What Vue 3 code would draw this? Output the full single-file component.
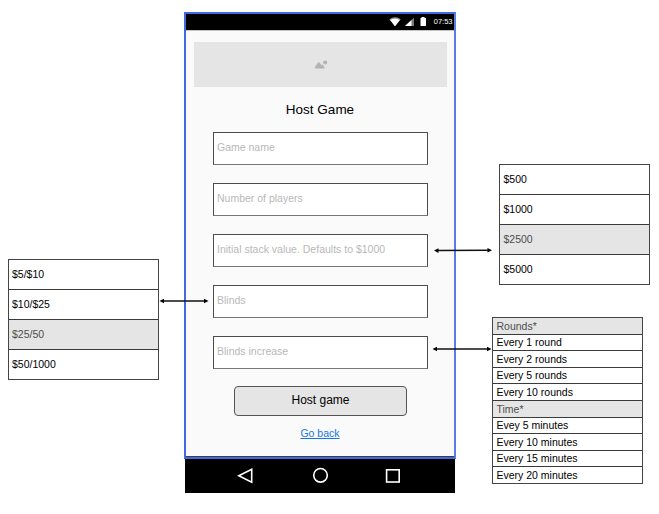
<script setup>
const fields = [
  'Game name',
  'Number of players',
  'Initial stack value. Defaults to $1000',
  'Blinds',
  'Blinds increase',
]

const menus = [
  {
    name: 'blinds',
    items: [
      { label: '$5/$10' },
      { label: '$10/$25' },
      { label: '$25/50', muted: true },
      { label: '$50/1000' },
    ],
  },
  {
    name: 'stack',
    items: [
      { label: '$500' },
      { label: '$1000' },
      { label: '$2500', muted: true },
      { label: '$5000' },
    ],
  },
  {
    name: 'increase',
    items: [
      { label: 'Rounds*', muted: true },
      { label: 'Every 1 round' },
      { label: 'Every 2 rounds' },
      { label: 'Every 5 rounds' },
      { label: 'Every 10 rounds' },
      { label: 'Time*', muted: true },
      { label: 'Evey 5 minutes' },
      { label: 'Every 10 minutes' },
      { label: 'Every 15 minutes' },
      { label: 'Every 20 minutes' },
    ],
  },
]

const arrows = [
  { x1: 159.5, y1: 301, x2: 208.5, y2: 301 },
  { x1: 434, y1: 250.6, x2: 492, y2: 250.2 },
  { x1: 432.5, y1: 349, x2: 491.5, y2: 349 },
]
</script>

<template>
  <main class="canvas">
    <section class="phone">
      <div class="screen">
        <header class="status">
          <svg class="status-icons" width="40" height="12" viewBox="0 0 40 12">
            <path d="M0.3 3.2Q6 -0.8 11.7 3.2L6 10.300Z" fill="#999" />
            <path d="M1.200 4Q6 1.400 10.800 4L6 10.300Z" fill="#fff" />
            <path d="M16 10L25 1.5V10Z" fill="#777" />
            <path d="M16 10L22.5 4V10Z" fill="#fff" />
            <path d="M32.5 1H35.500V2H37V10H31.500V2H32.500Z" fill="#fff" />
          </svg>
          <span class="clock">07:53</span>
        </header>
        <div class="banner">
          <svg width="14" height="10" viewBox="0 0 14 10" fill="#b3b3b3">
            <path d="M1 8.500L1.300 6.500L4 2.500Q4.800 1.800 5.600 2.600L7.700 5.500L8.700 4.600L10.400 7.300V8.500Z" />
            <circle cx="11.200" cy="2.400" r="2" />
          </svg>
        </div>
        <h1>Host Game</h1>
        <form class="fields">
          <div v-for="field in fields" :key="field" class="field">{{ field }}</div>
        </form>
        <div class="submit">Host game</div>
        <a class="back">Go back</a>
      </div>
      <nav class="navbar">
        <svg width="270" height="34" viewBox="0 0 270 34" fill="none" stroke="#fff" stroke-width="1.6">
          <path d="M66.700 10.300V23.300L53.800 16.800Z" />
          <circle cx="135.500" cy="16.300" r="6.800" />
          <rect x="201.600" y="10.800" width="12.600" height="12.200" />
        </svg>
      </nav>
    </section>

    <ul v-for="menu in menus" :key="menu.name" class="menu" :class="menu.name">
      <li v-for="item in menu.items" :key="item.label" :class="{ muted: item.muted }">
        <span>{{ item.label }}</span>
      </li>
    </ul>

    <svg class="arrows" width="659" height="514" viewBox="0 0 659 514">
      <g v-for="a in arrows" :key="a.x1">
        <line :x1="a.x1 + 3" :y1="a.y1" :x2="a.x2 - 3" :y2="a.y2" stroke="#111" stroke-width="1.5" />
        <path :d="`M${a.x1} ${a.y1}l4.500 -2.300v4.600z`" />
        <path :d="`M${a.x2} ${a.y2}l-4.500 -2.300v4.600z`" />
      </g>
    </svg>
  </main>
</template>

<style>
body {
  margin: 0;
  background: #fff;
}
</style>

<style scoped>
.canvas {
  position: relative;
  width: 659px;
  height: 514px;
  overflow: hidden;
  font-family: "Liberation Sans", Arial, sans-serif;
  font-size: 10.5px;
  color: #000;
}

.phone {
  position: absolute;
  left: 184px;
  top: 12px;
  width: 272px;
}

.screen {
  box-sizing: border-box;
  display: flex;
  flex-direction: column;
  align-items: center;
  height: 447px;
  border: 2px solid #4169e1;
  border-right-color: #5a7ee8;
  background: linear-gradient(#3c3c46, #3c3c46) bottom / 100% 1px no-repeat #fafafa;
}

.status {
  box-sizing: border-box;
  display: flex;
  align-items: center;
  justify-content: flex-end;
  align-self: stretch;
  height: 17px;
  padding-right: 1.500px;
  border-bottom: 1px solid #c4c4c4;
  background: #000;
}

.status-icons {
  margin-right: 5px;
}

.clock {
  color: #fff;
  font-size: 7.500px;
  line-height: 16px;
}

.banner {
  display: flex;
  align-items: center;
  justify-content: center;
  width: 253px;
  height: 44.500px;
  margin: 11px 0 0 1px;
  background: #e5e5e5;
}

.banner svg {
  margin-top: 1px;
}

h1 {
  margin: 15.500px 0 0;
  font-size: 13.500px;
  font-weight: 400;
  line-height: 16px;
}

.fields {
  display: flex;
  flex-direction: column;
  gap: 18px;
  width: 215px;
  margin: 14px 0 0 1px;
}

.field {
  box-sizing: border-box;
  height: 33px;
  padding-left: 3px;
  border: 1px solid #4d4d4d;
  border-bottom-color: #777;
  background: #fff;
  color: #b8b8b8;
  line-height: 29px;
}

.submit {
  box-sizing: border-box;
  width: 173px;
  height: 30px;
  margin: 17px 0 0 1px;
  border: 1px solid #555;
  border-radius: 4px;
  background: #e5e5e5;
  font-size: 12px;
  line-height: 27px;
  text-align: center;
}

.back {
  margin-top: 11px;
  color: #1476e8;
  line-height: 13px;
  text-decoration: underline;
}

.navbar {
  width: 270px;
  height: 34px;
  margin-left: 1px;
  background: #000;
}

.navbar svg {
  display: block;
}

.menu {
  position: absolute;
  box-sizing: border-box;
  display: grid;
  grid-auto-rows: 1fr;
  gap: 1px;
  width: 151px;
  height: 121px;
  margin: 0;
  padding: 0;
  border: 1px solid #444;
  background: #3a3a3a;
  list-style: none;
}

.menu li {
  display: flex;
  align-items: center;
  padding: 0 0 2px 3px;
  background: #fff;
}

.menu .muted {
  background: #e5e5e5;
  color: #4d4d4d;
}

.blinds {
  left: 8px;
  top: 259px;
}

.stack {
  left: 499px;
  top: 164px;
}

.stack li {
  padding-left: 3.500px;
}

.increase {
  left: 492px;
  top: 317px;
  height: 167px;
}

.increase li {
  padding: 0 0 0.500px 3.500px;
}

.arrows {
  position: absolute;
  left: 0;
  top: 0;
  pointer-events: none;
}
</style>
